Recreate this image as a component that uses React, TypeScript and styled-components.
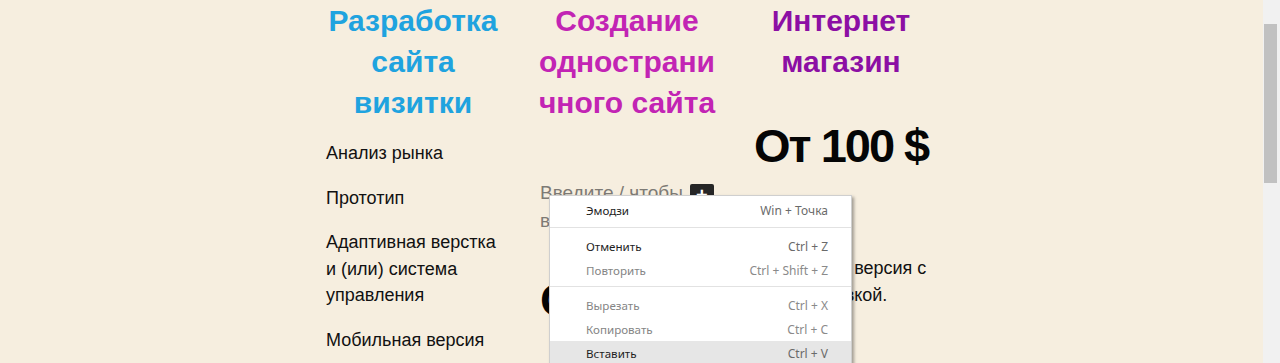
import React from "react";
import styled, { createGlobalStyle } from "styled-components";

const Global = createGlobalStyle`
  html, body { margin: 0; padding: 0; }
  body { font-family: "Liberation Sans", Arial, sans-serif; background: #f6eedf; }
`;

const Page = styled.div`
  position: relative;
  display: flex;
  width: 1280px;
  height: 363px;
  overflow: hidden;
`;

const Main = styled.main`
  flex: 1;
  background: #f6eedf;
  padding-left: 306px;
`;

const Columns = styled.div`
  display: grid;
  grid-template-columns: repeat(3, 214px);
`;

const Column = styled.section`
  display: flex;
  flex-direction: column;
  padding: 0 20px;
`;

const Heading = styled.h2<{ $color: string }>`
  margin: 0 -20px;
  height: 123px;
  font-size: 30px;
  line-height: 41px;
  font-weight: 700;
  text-align: center;
  color: ${(p) => p.$color};
`;

const Item = styled.p`
  margin: 17px 0 0;
  font-size: 18px;
  line-height: 26.5px;
  color: #111;
  & + & { margin-top: 18px; }
`;

const Placeholder = styled.p`
  margin: 56px 0 0;
  font-size: 19px;
  line-height: 27px;
  color: #7d7a75;
  white-space: nowrap;
`;

const AddButton = styled.span`
  display: inline-flex;
  align-items: center;
  justify-content: center;
  width: 24px;
  height: 23px;
  margin-left: 7px;
  vertical-align: -3px;
  background: #262626;
  border-radius: 2px;
  color: #fff;
  font-size: 20px;
  font-weight: 700;
  line-height: 1;
`;

const Price = styled.div<{ $top: number }>`
  margin-top: ${(p) => p.$top}px;
  font-size: 47px;
  line-height: 46px;
  font-weight: 700;
  letter-spacing: -2px;
  color: #050505;
  white-space: nowrap;
`;

const Note = styled.p`
  margin: 86px -20px 0 0;
  font-size: 18px;
  line-height: 27px;
  color: #111;
`;

const Scrollbar = styled.div`
  width: 17px;
  flex: none;
  background: #f1f1f1;
  padding: 24px 3px 0 1px;
  box-sizing: border-box;
`;

const Thumb = styled.div`
  height: 159px;
  background: #c1c1c1;
`;

const Menu = styled.ul`
  position: absolute;
  left: 549px;
  top: 195px;
  width: 303px;
  margin: 0;
  padding: 2px 0 0;
  list-style: none;
  background: #fff;
  border: 1px solid #cfcfcf;
  box-sizing: border-box;
  box-shadow: 2px 2px 3px rgba(0, 0, 0, 0.35);
  font-family: "Noto Sans", "Open Sans", sans-serif;
  font-size: 11.6px;
  height: 190px;
`;

const MenuItem = styled.li<{ $disabled?: boolean; $active?: boolean }>`
  display: flex;
  justify-content: space-between;
  align-items: center;
  height: 24px;
  padding: 0 23px 0 36px;
  color: ${(p) => (p.$disabled ? "#858585" : "#1e1e1e")};
  background: ${(p) => (p.$active ? "#e6e6e6" : "transparent")};
`;

const Shortcut = styled.span<{ $disabled?: boolean }>`
  font-size: 12px;
  color: ${(p) => (p.$disabled ? "#8a8a8a" : "#6a6a6a")};
`;

const Separator = styled.li<{ $tight?: boolean }>`
  height: 1px;
  margin: ${(p) => (p.$tight ? "4px 0 6px" : "5px 0 6px")};
  background: #e2e2e2;
`;

type Entry =
  | { label: string; keys: string; disabled?: boolean; active?: boolean }
  | { sep: true; tight?: boolean };

const entries: Entry[] = [
  { label: "Эмодзи", keys: "Win + Точка" },
  { sep: true },
  { label: "Отменить", keys: "Ctrl + Z" },
  { label: "Повторить", keys: "Ctrl + Shift + Z", disabled: true },
  { sep: true, tight: true },
  { label: "Вырезать", keys: "Ctrl + X", disabled: true },
  { label: "Копировать", keys: "Ctrl + C", disabled: true },
  { label: "Вставить", keys: "Ctrl + V", active: true },
];

export default function App() {
  return (
    <>
      <Global />
      <Page>
        <Main>
          <Columns>
            <Column>
              <Heading $color="#1fa3df">
                Разработка
                <br />
                сайта
                <br />
                визитки
              </Heading>
              <Item>Анализ рынка</Item>
              <Item>Прототип</Item>
              <Item>
                Адаптивная верстка
                <br />и (или) система
                <br />
                управления
              </Item>
              <Item>Мобильная версия</Item>
            </Column>
            <Column>
              <Heading $color="#c224b4">
                Создание
                <br />
                однострани
                <br />
                чного сайта
              </Heading>
              <Placeholder>
                Введите / чтобы
                <AddButton>+</AddButton>
                <br />
                выбрать блок
              </Placeholder>
              <Price $top={43}>От 50 $</Price>
            </Column>
            <Column>
              <Heading $color="#8c0fa4">
                Интернет
                <br />
                магазин
              </Heading>
              <Price $top={0}>От 100 $</Price>
              <Note>
                Мобильная версия с
                <br />
                1С и доставкой.
              </Note>
            </Column>
          </Columns>
        </Main>
        <Scrollbar>
          <Thumb />
        </Scrollbar>
        <Menu>
          {entries.map((e, i) =>
            "sep" in e ? (
              <Separator key={i} $tight={e.tight} />
            ) : (
              <MenuItem key={i} $disabled={e.disabled} $active={e.active}>
                <span>{e.label}</span>
                <Shortcut $disabled={e.disabled}>{e.keys}</Shortcut>
              </MenuItem>
            )
          )}
        </Menu>
      </Page>
    </>
  );
}
